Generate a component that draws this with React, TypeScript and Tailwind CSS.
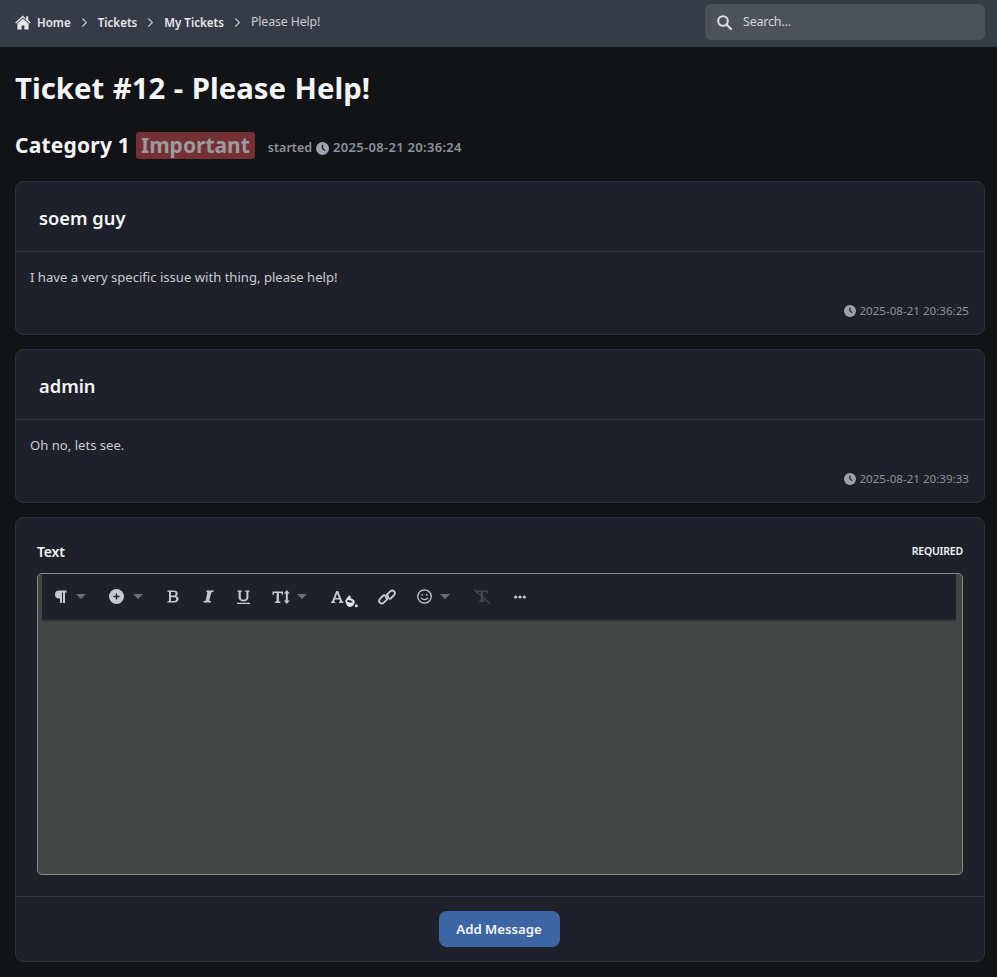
import React from "react";
import { ChevronRight } from "lucide-react";

const font = "[font-family:'Noto_Sans','Open_Sans',sans-serif]";
const c = "#c4c9d1";

function HomeIcon() {
  return (
    <svg width="16" height="15" viewBox="0 0 16 15" className="text-[#e5e7eb]" fill="currentColor">
      <path d="M8 .6 .2 7.4l.9 1L8 2.5l6.9 5.9.9-1-2.6-2.3V1.3h-2v3L8 .6Z" />
      <path d="M8 3.8 2.400 8.600v5.800h4.200v-4h2.800v4h4.200V8.600L8 3.800Z" />
    </svg>
  );
}

function SearchIcon() {
  return (
    <svg width="15" height="15" viewBox="0 0 15 15" fill="none" stroke="#d6dae0" strokeWidth="2.100">
      <circle cx="6" cy="6" r="4.800" />
      <path d="M9.500 9.500 14 14" strokeWidth="2.400" strokeLinecap="round" />
    </svg>
  );
}

function ClockIcon({ size = 12, hand = "#1e2129" }: { size?: number; hand?: string }) {
  return (
    <svg width={size} height={size} viewBox="0 0 12 12">
      <circle cx="6" cy="6" r="6" fill="#9ca3af" />
      <path d="M6 2.600V6l2.200 1.800" stroke={hand} strokeWidth="1.200" fill="none" />
    </svg>
  );
}

function Caret({ tight = false }: { tight?: boolean }) {
  return (
    <span
      className={`${tight ? "ml-[8px]" : "ml-[9px]"} w-0 h-0 border-x-[5.5px] border-x-transparent border-t-[5px] border-t-[#6b7078]`}
    />
  );
}

function Crumb({ label }: { label: string }) {
  return (
    <>
      <span className="pt-[1px] text-[11.550px] font-semibold text-[#e5e7eb]">{label}</span>
      <ChevronRight size={15} strokeWidth={1.750} className="text-[#c4c8ce] mx-[6px]" />
    </>
  );
}

function Message({ name, text, time }: { name: string; text: string; time: string }) {
  return (
    <section className="rounded-lg border border-[#2d3138] bg-[#1e2129]">
      <div className="h-[70px] flex items-center pl-[23px] pt-[2px] border-b border-[#353840]">
        <h3 className="text-[18.300px] font-semibold text-[#f3f4f6]">{name}</h3>
      </div>
      <div className="px-[14px] pt-[15px] pb-[13px]">
        <p className="text-[13.100px] leading-[20px] text-[#c8ccd2]">{text}</p>
        <div className="mt-[14px] flex items-center justify-end pr-[1px] gap-[3px] text-[11.600px] leading-[20px] text-[#8c919a]">
          <ClockIcon />
          <span>{time}</span>
        </div>
      </div>
    </section>
  );
}

function ParagraphIcon() {
  return (
    <svg width="13" height="13" viewBox="0 0 13 13" fill={c}>
      <path d="M5 .5h7.500v2H11v10.500H9V2.500H8V13H6V8.500H5A4 4 0 0 1 5 .5Z" />
    </svg>
  );
}

function PlusCircle() {
  return (
    <svg width="15" height="15" viewBox="0 0 15 15">
      <circle cx="7.500" cy="7.500" r="7.500" fill={c} />
      <path d="M7.500 4.500v6M4.500 7.500h6" stroke="#1e2129" strokeWidth="1.300" />
    </svg>
  );
}

function BoldIcon() {
  return (
    <svg width="12" height="13" viewBox="0 0 12 13" fill={c} fillRule="evenodd">
      <path d="M.5.500h6.300c2.500 0 3.900 1 3.900 3 0 1.300-.7 2.200-1.800 2.600 1.500.3 2.600 1.300 2.600 3 0 2.300-1.700 3.400-4.300 3.400H.5v-1.300l1.500-.2V2L.5 1.800V.500ZM4 2v3.600h2.500c1.400 0 2.100-.6 2.100-1.800C8.600 2.600 7.900 2 6.600 2H4Zm0 5.200V11h3c1.500 0 2.200-.6 2.200-1.900 0-1.300-.8-1.900-2.200-1.900H4Z" />
    </svg>
  );
}

function ItalicIcon() {
  return (
    <svg width="11" height="13" viewBox="0 0 11 13" fill={c}>
      <path d="M3.600.500h7.100l-.3 1.500-2 .2L6.100 10.800l2 .2-.3 1.500H.3l.3-1.500 2-.2L4.400 2.200l-1.100-.2.3-1.500Z" />
    </svg>
  );
}

function UnderlineIcon() {
  return (
    <svg width="13" height="14" viewBox="0 0 13 14" fill={c}>
      <path d="M.5.500h4.300v1.300l-1 .2v5.300c0 1.700.9 2.500 2.800 2.500 1.800 0 2.800-.8 2.800-2.500V2l-1-.2V.500h4.100v1.300l-1.100.2v5.300c0 2.700-1.700 4.100-4.800 4.100-3.200 0-5-1.300-5-4.100V2L.5 1.800V.500Z" />
      <rect x="0" y="12.700" width="13" height="1.300" />
    </svg>
  );
}

function FontSizeIcon() {
  return (
    <svg width="18" height="14" viewBox="0 0 18 14" fill={c}>
      <path d="M.5 1.500h10.500v3.300H9.700l-.4-1.800H6.900v8.300l1.400.3V13H3.200v-1.400l1.400-.3V3H2.200l-.4 1.800H.5V1.500Z" />
      <path d="M14.800 0 17.800 3.400h-2V10.600h2L14.800 14 11.800 10.600h2V3.400h-2L14.800 0Z" />
    </svg>
  );
}

function TextColorIcon() {
  return (
    <svg width="27" height="18" viewBox="0 0 27 18">
      <path fill={c} d="M0 13v-1.200l1-.2L5.200 1h2L11.400 11.600l1 .2V13H8v-1.200l1.100-.2-.8-2.100H3.900l-.8 2.100 1.100.2V13H0Zm4.400-4.900h3.400L6.100 3.700 4.400 8.100Z" />
      <path fill="#dfe2e6" fillRule="evenodd" d="M16.300 7.500l2-2.300 1.700 1.500-.8 1 2.700 1.600c1 .6 1.600 1.500 1.900 2.500-.5 2.800-2.300 5.200-4.800 5.200-2.200 0-3.300-1.600-3.900-3.500l-1-2.500 2.200-3.500Zm.5 2.600-.9 1.300c1.800.9 4.500 1.400 6 .9-1.300-1.400-3.200-2.300-5.100-2.200Z" />
      <circle cx="25.300" cy="15.800" r="1.500" fill="#dfe2e6" />
    </svg>
  );
}

function LinkIcon() {
  return (
    <svg width="18" height="16" viewBox="0 0 18 16" fill="none" stroke={c} strokeWidth="1.900">
      <path d="M7.300 6.200 5.300 6.500 2 9.800c-1.500 1.600-1 3.300 0 4 1 .9 2.600 1 3.800-.2l3.500-3.500c1.300-1.400 1-3-.1-3.900" />
      <path d="M10.700 9.800l2-.3L16 6.200c1.500-1.600 1-3.300 0-4-1-.9-2.600-1-3.800.2L8.700 5.900c-1.300 1.400-1 3 .1 3.900" />
    </svg>
  );
}

function SmileIcon() {
  return (
    <svg width="15" height="15" viewBox="0 0 15 15" fill="none" stroke={c} strokeWidth="1.300">
      <circle cx="7.500" cy="7.500" r="6.700" />
      <circle cx="5.200" cy="5.800" r=".9" fill={c} stroke="none" />
      <circle cx="9.800" cy="5.800" r=".9" fill={c} stroke="none" />
      <path d="M4.300 9.200c1.600 2 4.800 2 6.400 0" strokeLinecap="round" />
    </svg>
  );
}

function ClearIcon() {
  return (
    <svg width="18" height="15" viewBox="0 0 18 15" fill="#45494f">
      <path d="M3 1.500h12v3h-1.100l-.5-1.600H10.200v8.400l1.400.3V13H6.400v-1.400l1.400-.3V2.900H4.600L4.100 4.500H3v-3Z" />
      <path d="M1 .5 17 14.500" stroke="#45494f" strokeWidth="1.300" />
    </svg>
  );
}

function DotsIcon() {
  return (
    <svg width="12" height="4" viewBox="0 0 12 4" fill={c}>
      <circle cx="1.700" cy="2" r="1.600" />
      <circle cx="6" cy="2" r="1.600" />
      <circle cx="10.300" cy="2" r="1.600" />
    </svg>
  );
}

const tool = "flex items-center shrink-0";

export default function App() {
  return (
    <div className={`${font} min-h-[977px] bg-[#121316] text-white`}>
      <header className="h-[47px] bg-[#363c47] flex items-center justify-between pl-[15px] pr-[12px] pb-[3px]">
        <nav className="flex items-center">
          <HomeIcon />
          <span className="w-[6px]" />
          <Crumb label="Home" />
          <Crumb label="Tickets" />
          <Crumb label="My Tickets" />
          <span className="pt-[1px] text-[12.300px] text-[#c8ccd2] tracking-[-0.1px]">Please Help!</span>
        </nav>
        <div className="w-[280px] h-[36px] rounded-md bg-[#4c515a] flex items-center pl-[12px]">
          <SearchIcon />
          <span className="ml-[11px] pt-[1px] text-[12.500px] tracking-[-0.200px] text-[#d1d5db]">Search...</span>
        </div>
      </header>

      <main className="pl-[15px] pr-[12px]">
        <h1 className="pt-[21px] text-[29.300px] leading-[40px] font-bold [word-spacing:1px] text-[#f3f4f6]">Ticket #12 - Please Help!</h1>
        <div className="mt-[23px] h-[30px] flex items-center">
          <span className="text-[21px] font-bold text-[#f3f4f6] tracking-[0.2px]">Category 1</span>
          <span className="ml-[6px] h-[27px] -mt-[1px] rounded-[3px] bg-[#743034] px-[5px] flex items-center text-[21px] font-bold text-[#9b9b9b]">Important</span>
          <span className="ml-[13px] flex items-center text-[13px] font-semibold text-[#8c929c] mt-[4px]">
            <span className="text-[12.500px]">started</span>
            <span className="mx-[4px]"><ClockIcon size={13} hand="#121316" /></span>
            <span className="tracking-[0.300px]">2025-08-21 20:36:24</span>
          </span>
        </div>

        <div className="mt-[20px] flex flex-col gap-[14px]">
          <Message name="soem guy" text="I have a very specific issue with thing, please help!" time="2025-08-21 20:36:25" />
          <Message name="admin" text="Oh no, lets see." time="2025-08-21 20:39:33" />

          <section className="rounded-lg border border-[#2d3138] bg-[#1e2129]">
            <div className="px-[21px] pt-[23px] pb-[21px] border-b border-[#353840]">
              <div className="flex items-center justify-between h-[20px]">
                <span className="text-[14px] font-semibold text-[#f3f4f6] tracking-[-0.200px]">Text</span>
                <span className="text-[10.500px] font-semibold text-[#f3f4f6] tracking-[-0.200px] pt-[1px]">REQUIRED</span>
              </div>
              <div className="mt-[12px] h-[302px] rounded-[5px] border border-[#8a8b86] bg-[#434544] pl-[4px] pr-[6px]">
                <div className="h-[47px] bg-[#1e2129] border-b-2 border-[#2c2f34] flex items-center pl-[12px]">
                  <span className={tool}><ParagraphIcon /><Caret /></span>
                  <span className={`${tool} ml-[23px]`}><PlusCircle /><Caret /></span>
                  <span className={`${tool} ml-[24px]`}><BoldIcon /></span>
                  <span className={`${tool} ml-[24px]`}><ItalicIcon /></span>
                  <span className={`${tool} ml-[23px]`}><UnderlineIcon /></span>
                  <span className={`${tool} ml-[22px]`}>
                    <FontSizeIcon />
                    <span className="ml-[7px] w-0 h-0 border-x-[5.5px] border-x-transparent border-t-[5px] border-t-[#6b7078]" />
                  </span>
                  <span className={`${tool} ml-[24px] mt-[4px]`}><TextColorIcon /></span>
                  <span className={`${tool} ml-[20px]`}><LinkIcon /></span>
                  <span className={`${tool} ml-[21px]`}><SmileIcon /><Caret tight /></span>
                  <span className={`${tool} ml-[23px]`}><ClearIcon /></span>
                  <span className={`${tool} ml-[23px]`}><DotsIcon /></span>
                </div>
              </div>
            </div>
            <div className="h-[64px] flex items-start justify-center pt-[14px] pr-[2px]">
              <button className="w-[121px] h-[36px] rounded-lg bg-[#3e66a3] pt-[2px] text-[13.200px] font-semibold text-[#f3f4f6]">Add Message</button>
            </div>
          </section>
        </div>
      </main>
    </div>
  );
}
